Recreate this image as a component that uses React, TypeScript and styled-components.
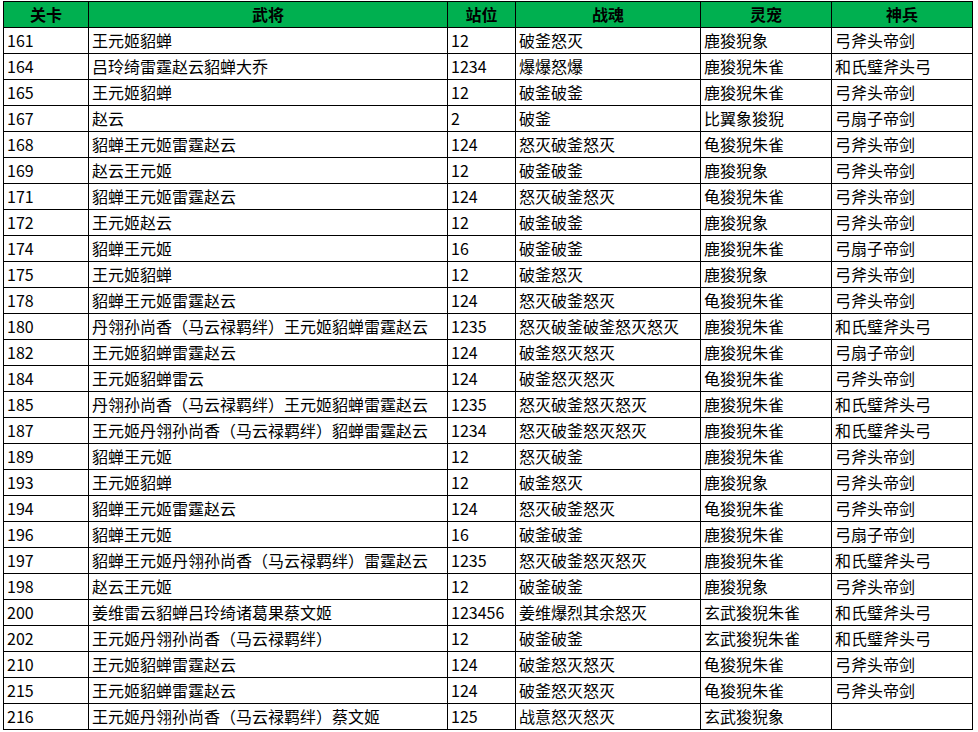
import React, { FC } from 'react';
import styled, { createGlobalStyle } from 'styled-components';

const Global = createGlobalStyle`
    html, body { margin: 0; padding: 0; background: #fff; }
    body { font-family: 'Noto Sans CJK SC', 'Noto Sans', sans-serif; }
`;

const Sheet = styled.table`
    margin: 1px 0 0 3px;
    border-collapse: collapse;
    table-layout: fixed;
    width: 970px;
    font-size: 16px;
    color: #000;
`;

const HeadCell = styled.th`
    background: #00b050;
    border: 1px solid #000;
    height: 25px;
    padding: 0;
    font-weight: 700;
    text-align: center;
    line-height: 25px;
`;

const Cell = styled.td`
    border: 1px solid #000;
    height: 25px;
    padding: 0 0 0 3px;
    line-height: 25px;
    white-space: nowrap;
    overflow: hidden;
`;

const cols = [85, 359, 68, 185, 131, 141];
const heads = ['关卡', '武将', '站位', '战魂', '灵宠', '神兵'];

const rows: string[][] = [
    ['161', '王元姬貂蝉', '12', '破釜怒灭', '鹿狻猊象', '弓斧头帝剑'],
    ['164', '吕玲绮雷霆赵云貂蝉大乔', '1234', '爆爆怒爆', '鹿狻猊朱雀', '和氏璧斧头弓'],
    ['165', '王元姬貂蝉', '12', '破釜破釜', '鹿狻猊朱雀', '弓斧头帝剑'],
    ['167', '赵云', '2', '破釜', '比翼象狻猊', '弓扇子帝剑'],
    ['168', '貂蝉王元姬雷霆赵云', '124', '怒灭破釜怒灭', '龟狻猊朱雀', '弓斧头帝剑'],
    ['169', '赵云王元姬', '12', '破釜破釜', '鹿狻猊象', '弓斧头帝剑'],
    ['171', '貂蝉王元姬雷霆赵云', '124', '怒灭破釜怒灭', '龟狻猊朱雀', '弓斧头帝剑'],
    ['172', '王元姬赵云', '12', '破釜破釜', '鹿狻猊象', '弓斧头帝剑'],
    ['174', '貂蝉王元姬', '16', '破釜破釜', '鹿狻猊朱雀', '弓扇子帝剑'],
    ['175', '王元姬貂蝉', '12', '破釜怒灭', '鹿狻猊象', '弓斧头帝剑'],
    ['178', '貂蝉王元姬雷霆赵云', '124', '怒灭破釜怒灭', '龟狻猊朱雀', '弓斧头帝剑'],
    ['180', '丹翎孙尚香（马云禄羁绊）王元姬貂蝉雷霆赵云', '1235', '怒灭破釜破釜怒灭怒灭', '鹿狻猊朱雀', '和氏璧斧头弓'],
    ['182', '王元姬貂蝉雷霆赵云', '124', '破釜怒灭怒灭', '鹿狻猊朱雀', '弓扇子帝剑'],
    ['184', '王元姬貂蝉雷云', '124', '破釜怒灭怒灭', '龟狻猊朱雀', '弓斧头帝剑'],
    ['185', '丹翎孙尚香（马云禄羁绊）王元姬貂蝉雷霆赵云', '1235', '怒灭破釜怒灭怒灭', '鹿狻猊朱雀', '和氏璧斧头弓'],
    ['187', '王元姬丹翎孙尚香（马云禄羁绊）貂蝉雷霆赵云', '1234', '怒灭破釜怒灭怒灭', '鹿狻猊朱雀', '和氏璧斧头弓'],
    ['189', '貂蝉王元姬', '12', '怒灭破釜', '鹿狻猊朱雀', '弓斧头帝剑'],
    ['193', '王元姬貂蝉', '12', '破釜怒灭', '鹿狻猊象', '弓斧头帝剑'],
    ['194', '貂蝉王元姬雷霆赵云', '124', '怒灭破釜怒灭', '龟狻猊朱雀', '弓斧头帝剑'],
    ['196', '貂蝉王元姬', '16', '破釜破釜', '鹿狻猊朱雀', '弓扇子帝剑'],
    ['197', '貂蝉王元姬丹翎孙尚香（马云禄羁绊）雷霆赵云', '1235', '怒灭破釜怒灭怒灭', '鹿狻猊朱雀', '和氏璧斧头弓'],
    ['198', '赵云王元姬', '12', '破釜破釜', '鹿狻猊象', '弓斧头帝剑'],
    ['200', '姜维雷云貂蝉吕玲绮诸葛果蔡文姬', '123456', '姜维爆烈其余怒灭', '玄武狻猊朱雀', '和氏璧斧头弓'],
    ['202', '王元姬丹翎孙尚香（马云禄羁绊）', '12', '破釜破釜', '玄武狻猊朱雀', '和氏璧斧头弓'],
    ['210', '王元姬貂蝉雷霆赵云', '124', '破釜怒灭怒灭', '龟狻猊朱雀', '弓斧头帝剑'],
    ['215', '王元姬貂蝉雷霆赵云', '124', '破釜怒灭怒灭', '龟狻猊朱雀', '弓斧头帝剑'],
    ['216', '王元姬丹翎孙尚香（马云禄羁绊）蔡文姬', '125', '战意怒灭怒灭', '玄武狻猊象', ''],
];

const App: FC = () => {
    return (
        <>
            <Global />
            <Sheet>
                <colgroup>
                    {cols.map((w, i) => <col key={i} style={{ width: w }} />)}
                </colgroup>
                <thead>
                    <tr>
                        {heads.map(h => <HeadCell key={h}>{h}</HeadCell>)}
                    </tr>
                </thead>
                <tbody>
                    {rows.map(r => (
                        <tr key={r[0]}>
                            {r.map((c, i) => <Cell key={i}>{c}</Cell>)}
                        </tr>
                    ))}
                </tbody>
            </Sheet>
        </>
    );
};

export default App;
